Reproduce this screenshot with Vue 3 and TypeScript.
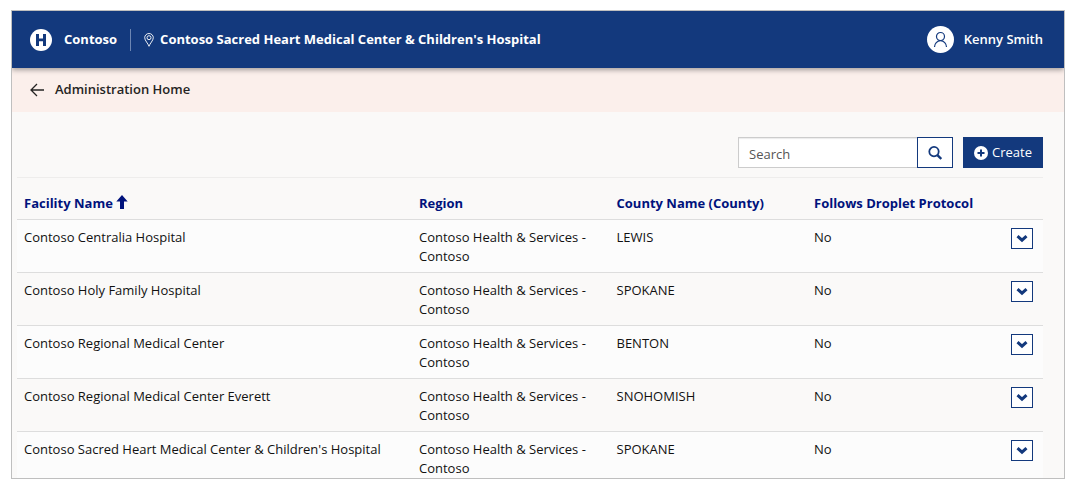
<script setup lang="ts">
import { ref, computed } from 'vue'

interface Facility {
  name: string
  region: string
  county: string
  droplet: string
}

const query = ref('')
const ascending = ref(true)

const facilities: Facility[] = [
  { name: 'Contoso Centralia Hospital', region: 'Contoso Health & Services - Contoso', county: 'LEWIS', droplet: 'No' },
  { name: 'Contoso Holy Family Hospital', region: 'Contoso Health & Services - Contoso', county: 'SPOKANE', droplet: 'No' },
  { name: 'Contoso Regional Medical Center', region: 'Contoso Health & Services - Contoso', county: 'BENTON', droplet: 'No' },
  { name: 'Contoso Regional Medical Center Everett', region: 'Contoso Health & Services - Contoso', county: 'SNOHOMISH', droplet: 'No' },
  { name: "Contoso Sacred Heart Medical Center & Children's Hospital", region: 'Contoso Health & Services - Contoso', county: 'SPOKANE', droplet: 'No' },
]

const rows = computed(() => {
  const q = query.value.trim().toLowerCase()
  const found = facilities.filter((f) => f.name.toLowerCase().includes(q))
  return ascending.value ? found : found.reverse()
})
</script>

<template>
  <div class="frame">
    <header class="topbar">
      <svg class="logo" viewBox="0 0 22 22" aria-hidden="true">
        <circle cx="11" cy="11" r="11" fill="#fff" />
        <path d="M6 5h3v4.500h4V5h3v12h-3v-4.800H9V17H6z" fill="#13397d" />
      </svg>
      <a class="brand" href="#">Contoso</a>
      <span class="divider"></span>
      <svg class="pin" viewBox="0 0 10 14" fill="none" stroke="#fff" stroke-width="0.900" aria-hidden="true">
        <path d="M5 13.300C4.200 10.600.700 7.500.700 4.700A4.300 4.200 0 0 1 9.300 4.700C9.300 7.500 5.800 10.600 5 13.300z" />
        <circle cx="5" cy="4.700" r="2" />
      </svg>
      <span class="site">Contoso Sacred Heart Medical Center &amp; Children's Hospital</span>
      <a class="user" href="#">
        <svg class="avatar" viewBox="0 0 27 27" fill="none" stroke="#13397d" stroke-width="1.200" aria-hidden="true">
          <circle cx="13.500" cy="13.500" r="13.500" fill="#fff" stroke="none" />
          <circle cx="13.500" cy="10.500" r="4" />
          <path d="M7.500 21a6 6.300 0 0 1 12 0" />
        </svg>
        <span>Kenny Smith</span>
      </a>
    </header>

    <nav class="crumb">
      <a href="#">
        <svg class="back" viewBox="0 0 14 13" fill="none" stroke="#252423" stroke-width="1.300" aria-hidden="true">
          <path d="M14 7H1M7 1L1 7l6 6" />
        </svg>
        <span>Administration Home</span>
      </a>
    </nav>

    <main class="content">
      <div class="toolbar">
        <form class="search" @submit.prevent>
          <input v-model="query" type="text" placeholder="Search" aria-label="Search" />
          <button type="submit" aria-label="Search facilities">
            <svg viewBox="0 0 14 14" fill="none" stroke="#13397d" aria-hidden="true">
              <circle cx="6" cy="5.600" r="4.700" stroke-width="1.800" />
              <path d="M9.400 9.100l3.900 3.900" stroke-width="2.400" />
            </svg>
          </button>
        </form>
        <button class="create" type="button">
          <svg viewBox="0 0 14 14" aria-hidden="true">
            <circle cx="7" cy="7" r="7" fill="#fff" />
            <path d="M7 3.500v7M3.500 7h7" stroke="#13397d" stroke-width="2" />
          </svg>
          <span>Create</span>
        </button>
      </div>

      <table>
        <colgroup>
          <col class="c-name" /><col class="c-mid" /><col class="c-mid" /><col class="c-mid" /><col />
        </colgroup>
        <thead>
          <tr>
            <th scope="col">
              <button class="sort" type="button" @click="ascending = !ascending">
                <span>Facility Name</span>
                <svg viewBox="0 0 12 14" aria-hidden="true">
                  <path v-if="ascending" d="M6 0l5.700 6.500H8V14H4V6.500H.3z" fill="#00127c" />
                  <path v-else d="M6 14L.3 7.500H4V0h4v7.500h3.700z" fill="#00127c" />
                </svg>
              </button>
            </th>
            <th scope="col">Region</th>
            <th scope="col">County Name (County)</th>
            <th scope="col">Follows Droplet Protocol</th>
            <td></td>
          </tr>
        </thead>
        <tbody>
          <tr v-for="row in rows" :key="row.name">
            <td>{{ row.name }}</td>
            <td>{{ row.region }}</td>
            <td>{{ row.county }}</td>
            <td>{{ row.droplet }}</td>
            <td class="actions">
              <button class="more" type="button" :aria-label="`Actions for ${row.name}`">
                <svg viewBox="0 0 12 8" fill="none" stroke="#13397d" stroke-width="3" aria-hidden="true">
                  <path d="M1.500 1.200L6 5.200l4.500-4" />
                </svg>
              </button>
            </td>
          </tr>
        </tbody>
      </table>
    </main>
  </div>
</template>

<style>
body {
  background: #fff;
}
</style>

<style scoped>
.frame {
  box-sizing: border-box;
  height: calc(100vh - 23px);
  margin: 10px 16px 13px 11px;
  overflow: hidden;
  border: 1px solid #bfbfbf;
  background: #faf9f8;
  color: #111;
  font-family: "Open Sans", "Noto Sans", sans-serif;
  font-size: 13px;
  line-height: 19px;
}
svg {
  display: block;
  flex: none;
}
a {
  color: inherit;
  text-decoration: none;
}
button,
input {
  box-sizing: border-box;
  margin: 0;
  border-radius: 0;
  font: inherit;
}
button {
  cursor: pointer;
}
.topbar {
  position: relative;
  display: flex;
  align-items: center;
  height: 57px;
  padding: 0 21px 0 18px;
  background: #13397d;
  box-shadow: 0 2px 5px rgba(0, 0, 0, 0.35);
  color: #fff;
  font-weight: 600;
}
.logo {
  width: 22px;
  height: 22px;
}
.brand {
  margin-left: 12px;
}
.brand,
.site {
  font-weight: 700;
}
.divider {
  width: 1px;
  height: 22px;
  margin: 0 13px;
  background: #6d86b3;
}
.pin {
  width: 10px;
  height: 14px;
  margin-right: 6px;
}
.user {
  display: flex;
  align-items: center;
  gap: 10px;
  margin-left: auto;
}
.avatar {
  width: 27px;
  height: 27px;
}
.crumb {
  height: 44px;
  padding: 0 18px;
  background: #fbefeb;
  color: #252423;
  font-weight: 600;
}
.crumb a {
  display: inline-flex;
  align-items: center;
  gap: 11px;
  height: 43px;
}
.back {
  width: 14px;
  height: 13px;
  overflow: visible;
}
.content {
  padding: 25px 21px 0 5px;
}
.toolbar {
  display: flex;
  justify-content: flex-end;
  gap: 10px;
  margin-bottom: 9px;
}
.search {
  display: flex;
  width: 215px;
}
.search input {
  flex: 1;
  min-width: 0;
  height: 31px;
  padding: 2px 10px 0;
  border: 1px solid #ccc;
  border-right: 0;
  background: #fff;
  box-shadow: inset 0 1px 1px rgba(0, 0, 0, 0.08);
  color: #111;
}
.search input::placeholder {
  color: #555;
  opacity: 1;
}
.search button {
  display: flex;
  align-items: center;
  justify-content: center;
  width: 36px;
  height: 31px;
  padding: 0;
  border: 1px solid #13397d;
  background: #fff;
}
.search svg,
.create svg {
  width: 14px;
  height: 14px;
}
.create {
  display: flex;
  align-items: center;
  justify-content: center;
  gap: 4px;
  width: 80px;
  height: 31px;
  padding: 0;
  border: 0;
  background: #13397d;
  color: #fff;
}
table {
  width: 100%;
  border-collapse: collapse;
  table-layout: fixed;
  border-top: 1px solid #eeedec;
}
.c-name {
  width: 38.5%;
}
.c-mid {
  width: 19.25%;
}
th,
td {
  border-bottom: 1px solid #ddd;
  text-align: left;
  vertical-align: top;
}
td {
  padding: 8px 7px 6px;
}
th {
  padding: 16px 7px 6px;
  color: #00127c;
  font-weight: 700;
  white-space: nowrap;
}
.actions {
  padding-left: 6px;
}
.sort {
  display: flex;
  gap: 3px;
  padding: 0;
  border: 0;
  background: none;
  color: inherit;
}
.sort svg {
  width: 12px;
  height: 14px;
  margin-top: 1px;
}
tbody tr:nth-child(odd) {
  background: #fcfcfc;
}
.more {
  display: flex;
  align-items: center;
  justify-content: center;
  width: 22px;
  height: 21px;
  padding: 0;
  border: 1px solid #13397d;
  background: #fff;
}
.more svg {
  width: 12px;
  height: 8px;
}
</style>
